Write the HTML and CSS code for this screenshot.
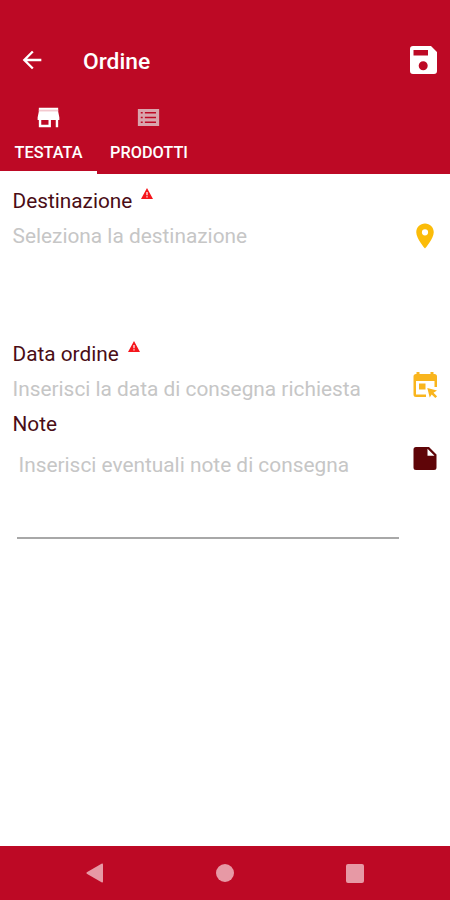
FILE: index.html
```html
<!DOCTYPE html>
<html lang="it">
<head>
  <meta charset="UTF-8">
  <meta name="viewport" content="width=device-width, initial-scale=1.0">
  <title>Ordine</title>
  <link rel="stylesheet" href="styles.css">
</head>
<body>
  <header class="header">
    <div class="toolbar">
      <svg class="back-icon" viewBox="0 0 24 24"><path d="M20 11H7.83l5.59-5.59L12 4l-8 8 8 8 1.41-1.41L7.83 13H20z"/></svg>
      <h1>Ordine</h1>
      <svg class="save-icon" viewBox="0 0 27 28"><path fill-rule="evenodd" d="M3 0h18l6 6v19a3 3 0 0 1-3 3H3a3 3 0 0 1-3-3V3a3 3 0 0 1 3-3zM3.500 4v5.500h14.500V4zM13.200 15.200a4.500 4.500 0 1 0 0 9 4.500 4.500 0 0 0 0-9z"/></svg>
    </div>
    <nav class="tabs">
      <div class="tab active">
        <svg viewBox="0 0 24 24"><path d="M20 4H4v3l-1 5v2h1v6h10v-6h4v6h2v-6h1v-2l-1-5zm-8 14H6v-4h6v4z"/><path class="roof" d="M4 5.500h16v1.500H4z"/></svg>
        <span>TESTATA</span>
      </div>
      <div class="tab tab-products">
        <svg viewBox="0 0 24 24"><path fill-rule="evenodd" d="M3.200 5h17.600v14H3.200zM5.600 7.500v1.200h1.600V7.500zM9 7.500v1.200h9.200V7.500zM5.600 11.400v1.200h1.600v-1.200zM9 11.400v1.200h9.200v-1.200zM5.600 15.300v1.200h1.600v-1.200zM9 15.300v1.200h9.200v-1.200z"/></svg>
        <span>PRODOTTI</span>
      </div>
    </nav>
  </header>

  <main class="form">
    <section class="field destination">
      <div class="label">
        <span>Destinazione</span>
        <svg class="warning" viewBox="0 0 12 11"><path fill-rule="evenodd" d="M6 0l6 11H0zM5.400 4v3.200h1.200V4zM5.400 8.200v1.300h1.200V8.200z"/></svg>
      </div>
      <div class="row">
        <span class="hint">Seleziona la destinazione</span>
        <svg class="pin" viewBox="0 0 24 24"><path d="M12 2C8.130 2 5 5.130 5 9c0 5.250 7 13 7 13s7-7.750 7-13c0-3.870-3.130-7-7-7zm0 9.500a2.500 2.500 0 0 1 0-5 2.500 2.500 0 0 1 0 5z"/></svg>
      </div>
    </section>

    <section class="field date">
      <div class="label">
        <span>Data ordine</span>
        <svg class="warning" viewBox="0 0 12 11"><path fill-rule="evenodd" d="M6 0l6 11H0zM5.400 4v3.200h1.200V4zM5.400 8.200v1.300h1.200V8.200z"/></svg>
      </div>
      <div class="row">
        <span class="hint">Inserisci la data di consegna richiesta</span>
        <svg class="calendar" viewBox="0 0 24 26"><path fill-rule="evenodd" d="M3.500 2V0h3v2h11V0h3v2h1A2.500 2.500 0 0 1 24 4.500V15h-2.500V9H3v13.500h10V25H3a2.500 2.500 0 0 1-2.500-2.500v-18A2.500 2.500 0 0 1 3 2z"/><path d="M6 11.500h6.500v6H6zM14.300 16l9.700 2.600-3.500 2.200 3.700 3.600-1.900 1.600-3.600-3.600-2 3.200z"/></svg>
      </div>
    </section>

    <section class="field note">
      <div class="label"><span>Note</span></div>
      <div class="row">
        <div class="note-input"><span class="hint">Inserisci eventuali note di consegna</span></div>
        <svg class="file" viewBox="0 0 24 23"><path fill-rule="evenodd" d="M3 0h13l7.500 7.500V20.500a2.500 2.500 0 0 1-2.500 2.500H3a2.500 2.500 0 0 1-2.500-2.500v-18A2.500 2.500 0 0 1 3 0zM14.500 1.800v7h7z"/></svg>
      </div>
    </section>
  </main>

  <footer class="navbar">
    <svg class="nav-back" viewBox="0 0 17 20"><path d="M15.500.7Q17 0 17 1.500v17q0 1.500-1.500.8L.8 10.700Q0 10 .8 9.300z"/></svg>
    <div class="nav-home"></div>
    <div class="nav-recent"></div>
  </footer>
</body>
</html>
```
FILE: styles.css
```css
* {
  box-sizing: border-box;
}
body {
  margin: 0;
  height: 900px;
  display: flex;
  flex-direction: column;
  background: #fff;
  font-family: Roboto, sans-serif;
  overflow: hidden;
}
svg {
  display: block;
  flex-shrink: 0;
  fill: currentColor;
}
span {
  white-space: nowrap;
}
.header {
  height: 174px;
  padding-top: 32px;
  background: #bd0925;
  color: #fff;
}
.toolbar {
  display: flex;
  align-items: center;
  height: 56px;
  padding: 0 13px 0 18px;
}
.back-icon {
  width: 28px;
  height: 28px;
  margin-top: -1px;
}
.toolbar h1 {
  flex: 1;
  margin: 4px 0 0 37px;
  font-size: 22.800px;
  font-weight: 500;
  line-height: 28px;
}
.save-icon {
  width: 27px;
  height: 28px;
  margin-top: -1px;
}
.tabs {
  display: flex;
  height: 86px;
}
.tab {
  display: flex;
  flex-direction: column;
  align-items: center;
  width: 97px;
  padding-top: 15px;
  font-size: 16.300px;
  font-weight: 500;
  line-height: 20px;
}
.tab svg {
  width: 29px;
  height: 29px;
  margin-bottom: 11px;
}
.tab .roof {
  fill: #f3c9cf;
}
.active {
  border-bottom: 3px solid #fff;
}
.tab-products {
  width: 104px;
}
.tab-products svg {
  margin-right: 1px;
  color: #d9a5ad;
}
.form {
  flex: 1;
  padding: 12px 12px 0 12.500px;
}
.label {
  display: flex;
  height: 30px;
  color: #4a0d16;
  font-size: 20.800px;
  line-height: 30px;
}
.warning {
  width: 12px;
  height: 11px;
  margin: 2px 0 0 9px;
  color: #f5161c;
}
.row {
  display: flex;
  justify-content: space-between;
}
.hint {
  color: #c6c6c6;
  font-size: 20.850px;
  line-height: 30px;
}
.destination {
  height: 153px;
}
.destination .row {
  padding-top: 5px;
}
.date {
  height: 70px;
}
.date .row {
  padding-top: 5px;
}
.pin {
  width: 30px;
  height: 30px;
  margin-right: -2px;
  color: #fbbc09;
}
.calendar {
  width: 24px;
  height: 26px;
  margin: -2px 1px 0 0;
  color: #f9b51e;
}
.note-input {
  width: 382px;
  height: 100px;
  margin-left: 4px;
  padding: 11px 0 0 2px;
  border-bottom: 2px solid #a8a8a8;
}
.file {
  width: 24px;
  height: 23px;
  margin: 8px 1px 0 0;
  color: #5f0508;
}
.navbar {
  display: flex;
  justify-content: space-between;
  align-items: center;
  height: 54px;
  padding: 0 86px;
  background: #bd0925;
  color: #e799a5;
}
.nav-back {
  width: 17px;
  height: 20px;
}
.nav-home {
  width: 18px;
  height: 18px;
  border-radius: 50%;
  background: #e799a5;
}
.nav-recent {
  width: 18px;
  height: 19px;
  border-radius: 2px;
  background: #e799a5;
}
```
